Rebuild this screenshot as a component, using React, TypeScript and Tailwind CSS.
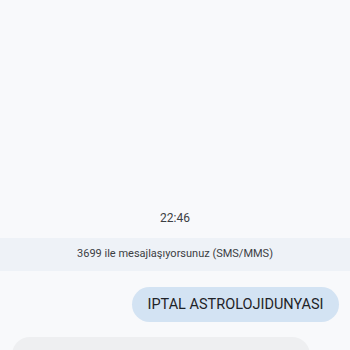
export default function App() {
  return (
    <div
      className="w-[350px] h-[350px] overflow-hidden bg-[#f8f9fb] flex flex-col"
      style={{ fontFamily: 'Roboto, "Noto Sans", sans-serif' }}
    >
      <div className="h-[210px] shrink-0" />
      <div className="h-4 shrink-0 flex items-center justify-center text-[12px] font-normal text-[#3c4043] leading-4">
        22:46
      </div>
      <div className="mt-3 h-[33px] shrink-0 bg-[#eef2f7] flex items-center justify-center text-[11px] text-[#3c4043]">
        3699 ile mesajlaşıyorsunuz (SMS/MMS)
      </div>
      <div className="mt-4 flex justify-end pr-[11px] shrink-0">
        <div className="h-[35px] w-[207px] rounded-full bg-[#d3e3f3] flex items-center justify-center text-[14.5px] text-[#1f2328] pt-[1px]">
          IPTAL ASTROLOJIDUNYASI
        </div>
      </div>
      <div className="mt-[15px] ml-[12px] w-[298px] shrink-0 rounded-[18px] bg-[#eeeff1] px-4 pt-[10px] pb-3 text-[15px] leading-5 text-[#a3a5a9]">
        Astrolojidunyasi aboneliginiz iptal edilmistir.
      </div>
    </div>
  );
}
